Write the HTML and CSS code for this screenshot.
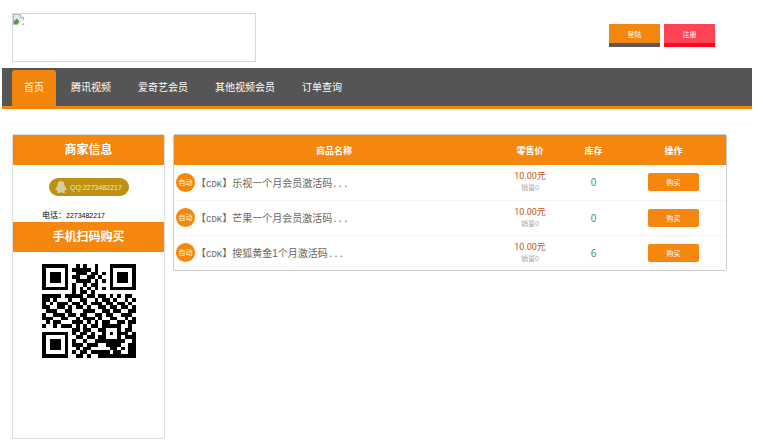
FILE: index.html
```html
<!DOCTYPE html>
<html lang="zh-CN">
<head>
    <meta charset="UTF-8">
    <meta name="viewport" content="width=device-width, initial-scale=1.0">
    <title>首页</title>
    <link rel="stylesheet" href="styles.css">
</head>
<body>
    <header class="header">
        <a href="#" class="logo" aria-label="首页">
            <svg class="broken-icon" viewBox="0 0 12 12">
                <path d="M.5 .5H8L11.500 4V11.500H.5Z" fill="#e4ecf6" stroke="#a8aeb4"/>
                <path d="M8 .5V4H11.500" fill="#fff" stroke="#a8aeb4"/>
                <path d="M1 11V8L4 5L7 8L5 11Z" fill="#4fa143"/>
                <path d="M5 12L12 6V9L9 12Z" fill="#fff"/>
            </svg>
        </a>
        <div class="user-buttons">
            <button class="btn-login">登陆</button>
            <button class="btn-register">注册</button>
        </div>
    </header>

    <nav class="nav">
        <a href="#" class="nav-item active">首页</a>
        <a href="#" class="nav-item">腾讯视频</a>
        <a href="#" class="nav-item">爱奇艺会员</a>
        <a href="#" class="nav-item">其他视频会员</a>
        <a href="#" class="nav-item">订单查询</a>
    </nav>

    <main class="content">
        <aside class="sidebar">
            <h2 class="side-title">商家信息</h2>
            <div class="contact">
                <a href="#" class="qq">
                    <svg class="qq-icon" viewBox="0 0 12 12">
                        <path d="M6 0C3.700 0 2.600 1.700 2.600 3.700C2.600 5 1 6.200 .6 8C.3 9.400 1 9.600 1.700 8.800C1.900 9.500 2.200 10 2.700 10.400C1.600 11 2 12 3.400 12C4.600 12 5.400 11.700 6 11.300C6.600 11.700 7.400 12 8.600 12C10 12 10.400 11 9.300 10.400C9.800 10 10.100 9.500 10.300 8.800C11 9.600 11.700 9.400 11.400 8C11 6.200 9.400 5 9.400 3.700C9.400 1.700 8.300 0 6 0Z" fill="#d8cba0"/>
                    </svg>
                    <span>QQ:2273482217</span>
                </a>
                <p class="phone">电话：<span>2273482217</span></p>
            </div>
            <h2 class="side-title">手机扫码购买</h2>
            <svg id="qrcode" class="qrcode" viewBox="0 0 25 25" shape-rendering="crispEdges"></svg>
        </aside>

        <div class="goods">
            <table>
                <thead>
                    <tr>
                        <th class="col-name">商品名称</th>
                        <th class="col-price">零售价</th>
                        <th class="col-stock">库存</th>
                        <th>操作</th>
                    </tr>
                </thead>
                <tbody>
                    <tr>
                        <td><div class="name"><span class="auto">自动</span><a href="#">【<span>CDK</span>】乐视一个月会员激活码<span>...</span></a></div></td>
                        <td><div class="price">10.00元</div><div class="sales">销量0</div></td>
                        <td class="stock">0</td>
                        <td><button class="buy">购买</button></td>
                    </tr>
                    <tr>
                        <td><div class="name"><span class="auto">自动</span><a href="#">【<span>CDK</span>】芒果一个月会员激活码<span>...</span></a></div></td>
                        <td><div class="price">10.00元</div><div class="sales">销量0</div></td>
                        <td class="stock">0</td>
                        <td><button class="buy">购买</button></td>
                    </tr>
                    <tr>
                        <td><div class="name"><span class="auto">自动</span><a href="#">【<span>CDK</span>】搜狐黄金1个月激活码<span>...</span></a></div></td>
                        <td><div class="price">10.00元</div><div class="sales">销量0</div></td>
                        <td class="stock">6</td>
                        <td><button class="buy">购买</button></td>
                    </tr>
                </tbody>
            </table>
        </div>
    </main>
    <script src="qrcode.js"></script>
</body>
</html>
```
FILE: styles.css
```css
* {
    box-sizing: border-box;
}

body {
    margin: 0 11px 0 2px;
    background: #fff;
    font-family: "Liberation Sans", "Noto Sans CJK SC", sans-serif;
    font-size: 10px;
    color: #222;
}

a {
    color: inherit;
    text-decoration: none;
}

button {
    border: none;
    padding: 0;
    color: #fff;
    font-family: inherit;
    font-size: 7px;
    cursor: pointer;
}

/* Header */
.header {
    display: flex;
    justify-content: space-between;
    align-items: flex-start;
    padding: 13px 37px 6px 10px;
}

.logo {
    width: 244px;
    height: 49px;
    border: 1px solid #d8d8d8;
}

.broken-icon {
    display: block;
    width: 11px;
    height: 11px;
}

.user-buttons {
    display: flex;
    gap: 4px;
    padding-top: 11px;
}

.user-buttons button {
    width: 51px;
    height: 23px;
}

.btn-login {
    background: #f3870f;
    border-bottom: 4px solid #5a5a5e;
}

.btn-register {
    background: #fe4455;
    border-bottom: 4px solid #fb0b22;
}

/* Nav */
.nav {
    display: flex;
    gap: 3px;
    padding: 2px 10px 0;
    background: #555;
    border-bottom: 3px solid #f3840c;
}

.nav-item {
    padding: 0 12px;
    line-height: 36px;
    color: #fff;
}

.nav-item.active {
    background: #f3840c;
    border-radius: 3px 3px 0 0;
}

/* Content */
.content {
    display: flex;
    align-items: flex-start;
    gap: 8px;
    margin-top: 14px;
    padding: 10px 25px 0 10px;
    border-top: 1px solid #f8f8f8;
}

.sidebar {
    width: 153px;
    min-height: 305px;
    border: 1px solid #ddd;
    border-radius: 2px;
}

.side-title {
    margin: 0;
    background: #f5860e;
    color: #fff;
    font-size: 12px;
    line-height: 30px;
    text-align: center;
}

.contact {
    padding-top: 13px;
}

.qq {
    display: flex;
    align-items: center;
    justify-content: center;
    gap: 3px;
    width: 80px;
    height: 18px;
    margin: 0 auto 14px;
    border-radius: 9px;
    background: #be900f;
    color: #f3e9c8;
    font-size: 7px;
}

.qq-icon {
    width: 12px;
    height: 12px;
}

.phone {
    margin: 0;
    padding-left: 29px;
    font-size: 8px;
    line-height: 12px;
    color: #000;
}

.phone span {
    font-size: 7px;
}

.qrcode {
    display: block;
    width: 94px;
    height: 94px;
    margin: 12px auto 0;
}

/* Goods table */
.goods {
    flex: 1;
    border: 1px solid #ccc;
    border-radius: 2px;
}

.goods table {
    width: 100%;
    table-layout: fixed;
    border-collapse: collapse;
}

.goods th {
    height: 30px;
    padding: 0;
    background: #f5860e;
    color: #fff;
    font-size: 9px;
}

.goods td {
    height: 35px;
    padding: 0;
    border-bottom: 1px solid #f5f5f5;
    text-align: center;
}

.goods tr:last-child td {
    border-bottom: none;
}

.col-name {
    width: 58%;
}

.col-price {
    width: 13%;
}

.col-stock {
    width: 10%;
}

.name {
    display: flex;
    align-items: center;
    gap: 1px;
    padding-left: 2px;
    color: #666;
}

.name a span {
    font-family: "Liberation Mono", monospace;
    font-size: 9px;
}

.name .auto {
    width: 19px;
    height: 19px;
    border-radius: 50%;
    background: #f5860e;
    color: #fff;
    font-size: 7px;
    line-height: 19px;
    text-align: center;
}

.price {
    font-family: Roboto, "Noto Sans CJK SC", sans-serif;
    font-size: 9px;
    line-height: 11px;
    color: #c4541c;
}

.sales {
    font-size: 7px;
    line-height: 11px;
    color: #aaa;
}

.goods .stock {
    font-family: "Open Sans", sans-serif;
    color: #3c9148;
}

.buy {
    width: 51px;
    height: 18px;
    border-radius: 2px;
    background: #f5860e;
}
```
FILE: qrcode.js
```js
// 1 = dark module
const rows = [
    "1111111001010010001111111",
    "1000001011111010001000001",
    "1011101001110110101011101",
    "1011101011001101001011101",
    "1011101001111010101011101",
    "1000001010010110001000001",
    "1111111010101010101111111",
    "0000000010110100000000000",
    "1111101111101101101010110",
    "1101000100110010110100101",
    "1010111011010111011011010",
    "1100110101101001101101101",
    "0111001100011100110110011",
    "1001110110110011011001110",
    "1110011001011101001100101",
    "0101100011101010110011011",
    "1001011101010110111110010",
    "0000000011011001100010110",
    "1111111010110100101011101",
    "1000001001101101100010111",
    "1011101010010011111111001",
    "1011101011101110011110011",
    "1011101001011000001101011",
    "1000001010110111110110011",
    "1111111001101001111111111"
];

let d = "";
rows.forEach((row, y) => {
    [...row].forEach((bit, x) => {
        if (bit === "1") {
            d += `M${x} ${y}h1v1h-1z`;
        }
    });
});

const path = document.createElementNS("http://www.w3.org/2000/svg", "path");
path.setAttribute("d", d);
document.getElementById("qrcode").appendChild(path);
```
